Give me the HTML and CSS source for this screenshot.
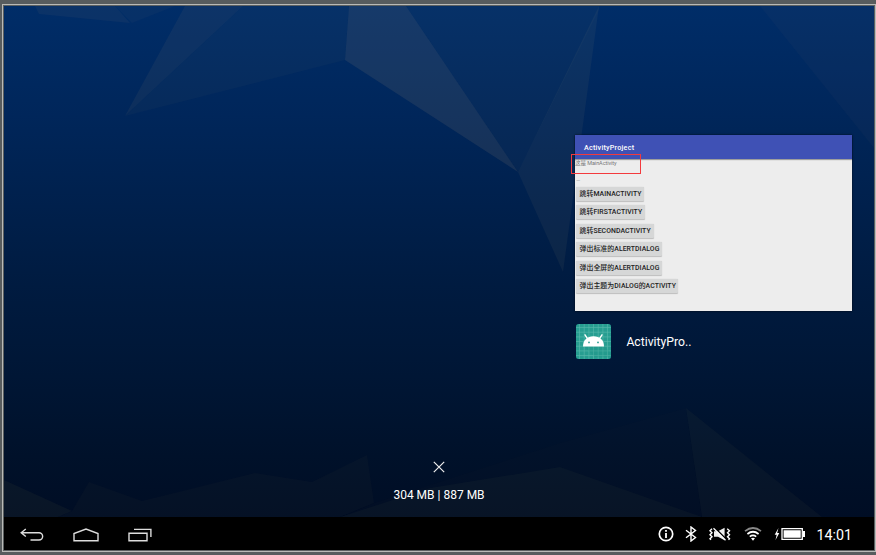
FILE: index.html
```html
<!DOCTYPE html>
<html lang="zh-CN">
<head>
<meta charset="utf-8">
<title>Recent apps</title>
<link rel="stylesheet" href="styles.css">
</head>
<body>
<div class="bezel">
<div class="screen">
  <main class="recents">
    <svg class="wallpaper" viewBox="4 6 870 511" aria-hidden="true">
      <g fill="#b7a078">
        <path opacity=".06" d="M35 6L39 14 130 23 115 6Z"/>
        <path opacity=".04" d="M115 6L132 23 175 6Z"/>
        <path opacity=".07" d="M185 6L125 116 243 6Z"/>
        <path opacity=".035" d="M243 6L125 116 345 60 349 6Z"/>
        <path opacity=".12" d="M349 6L345 60 518 172 406 6Z"/>
        <path opacity=".035" d="M406 6L518 172 599 10V6Z"/>
        <path opacity=".065" d="M599 6L518 172 563 272Z"/>
        <path opacity=".03" d="M760 6L874 148V6Z"/>
      </g>
      <g fill="#98a058">
        <path opacity=".06" d="M4 480L72 511 58 517H4Z"/>
        <path opacity=".03" d="M58 517L72 511 89 482 142 501 255 473 312 482 367 455 374 503 340 517Z"/>
        <path opacity=".012" d="M374 503L560 443 686 408 702 517H340Z"/>
        <path opacity=".045" d="M560 467L702 517H340L430 488Z"/>
        <path opacity=".045" d="M686 408L822 517H702Z"/>
      </g>
    </svg>
    <section class="task">
      <div class="preview">
        <header class="appbar">ActivityProject</header>
        <div class="app-body">
          <p class="caption">这是 MainActivity</p>
          <p class="dash">—</p>
          <div class="buttons">
            <span class="btn main">跳转MAINACTIVITY</span>
            <span class="btn first">跳转FIRSTACTIVITY</span>
            <span class="btn second">跳转SECONDACTIVITY</span>
            <span class="btn alert">弹出标准的ALERTDIALOG</span>
            <span class="btn alert">弹出全屏的ALERTDIALOG</span>
            <span class="btn themed">弹出主题为DIALOG的ACTIVITY</span>
          </div>
        </div>
        <div class="marker"></div>
      </div>
      <div class="app-label">
        <svg class="app-icon" viewBox="0 0 35 35" aria-hidden="true">
          <rect width="35" height="35" rx="2.5" fill="#279e91"/>
          <path d="M3.5 0V35M8.2 0V35M12.9 0V35M17.5 0V35M22.2 0V35M26.9 0V35M31.5 0V35M0 3.5H35M0 8.2H35M0 12.9H35M0 17.5H35M0 22.2H35M0 26.9H35M0 31.5H35" stroke="#5bb8ad" stroke-width=".6"/>
          <path d="M8 22L19 33H35V29L27 21Z" fill="#168f80" opacity=".22"/>
          <path d="M7 22.5C7 16 11.3 12.3 17.5 12.3S28 16 28 22.5Z" fill="#fff"/>
          <path d="M9 10.8L11.8 15.2M26 10.8L23.2 15.2" stroke="#fff" stroke-width="1.4" stroke-linecap="round"/>
          <circle cx="13" cy="18.4" r=".9" fill="#279e91"/><circle cx="22" cy="18.4" r=".9" fill="#279e91"/>
        </svg>
        <span class="app-name">ActivityPro..</span>
      </div>
    </section>
    <footer class="memory">
      <svg class="close" viewBox="0 0 12 12" aria-hidden="true"><path d="M.8.8L11.2 11.2M11.2.8L.8 11.2"/></svg>
      <span class="usage">304 MB | 887 MB</span>
    </footer>
  </main>
  <nav class="navbar">
    <div class="keys">
      <svg class="back" viewBox="0 0 24 14"><path d="M5.8 1L1.2 4.7 5.8 8.5M1.5 4.7H19A3.6 3.6 0 0 1 19 12H10.5"/></svg>
      <svg class="home" viewBox="0 0 26 14"><path d="M1 12.7V5.5L13 1.1 25 5.5V12.7Z"/></svg>
      <svg class="overview" viewBox="0 0 24 14"><path d="M1 5.2H19V12.8H1ZM6 1.4H22.9V9"/></svg>
    </div>
    <div class="status">
      <svg class="info" viewBox="0 0 16 16"><circle cx="8" cy="8" r="6.7" fill="none" stroke="#fff" stroke-width="1.7"/><path d="M7.1 4H8.9V5.8H7.1ZM7.1 7H8.9V12H7.1Z" fill="#fff"/></svg>
      <svg class="bluetooth" viewBox="0 0 12 16"><path d="M1 4.2L10.5 11.5 6 15V1L10.5 4.5 1 11.8" fill="none" stroke="#fff" stroke-width="1.4"/></svg>
      <svg class="mute" viewBox="0 0 22 14"><path d="M5 4.2H9L15.6.7V13.3L9 9.8H5Z" fill="#eee"/><path d="M6 1L17.5 12.5" stroke="#000" stroke-width="1.6"/><path d="M4.5 1.3L16.5 13.3" stroke="#fff" stroke-width="1.3"/><path d="M3 1.7L1 3.7 3 5.7 1 7.7 3 9.7 1 11.7 2 12.7M18.2 1.7L20.5 3.7 18.5 5.7 20.5 7.7 18.5 9.7 20.5 11.7 19.5 12.7" fill="none" stroke="#fff" stroke-width="1.4"/></svg>
      <svg class="wifi" viewBox="0 0 18 14"><g fill="none" stroke="#fff" stroke-width="1.7"><path d="M1 4.2Q9-2.2 17 4.2" stroke="#888"/><path d="M3.4 7Q9 2.5 14.6 7M5.8 9.7Q9 7.2 12.2 9.7"/></g><path d="M7 11.3Q9 10 11 11.3L9 13.7Z" fill="#fff"/></svg>
      <svg class="battery" viewBox="0 0 32 14"><path d="M4.5 1L.7 7.7H2.7L1.5 13 5.3 6H3.2Z" fill="#fff"/><path d="M8 1.7H28.3V12.3H8Z" fill="none" stroke="#fff" stroke-width="1.3"/><path d="M9.6 3.3H26.7V10.7H9.6ZM29 4H31V10H29Z" fill="#fff"/></svg>
      <time class="clock">14:01</time>
    </div>
  </nav>
</div>
</div>
</body>
</html>
```

FILE: styles.css
```css
* { box-sizing: border-box; }
body {
  margin: 0;
  height: 555px;
  padding: 4px 0 3px 2px;
  overflow: hidden;
  background: #575c5e;
  font-family: Roboto, "Noto Sans CJK SC", sans-serif;
}
.bezel {
  height: 548px;
  padding: 1px;
  border: 1px solid #b9bab7;
  background: #5b6061;
}
.screen {
  display: flex;
  flex-direction: column;
  width: 870px;
  height: 544px;
}
.recents {
  position: relative;
  display: flex;
  flex-direction: column;
  justify-content: space-between;
  height: 511px;
  padding-top: 129px;
  background: linear-gradient(#002d68 0, #00265a 110px, #00204c 200px, #001b40 280px, #001635 370px, #00112a 450px, #000d24 511px);
}
.wallpaper { position: absolute; inset: 0; width: 870px; height: 511px; }
.task { position: relative; width: 277px; margin-left: 571px; }
.preview {
  position: relative;
  height: 176px;
  background: #ededed;
  box-shadow: 0 0 2px #000b;
}
.appbar {
  height: 24px;
  padding-left: 9px;
  background: #3f51b5;
  box-shadow: 0 1px 1px #0005;
  color: #fff;
  font-size: 7.2px;
  font-weight: 500;
  letter-spacing: .22px;
  line-height: 25px;
}
.app-body { padding-left: 1px; }
.caption, .dash { margin: 0; color: #777; font-size: 5.5px; }
.caption { height: 18px; margin-left: -1px; letter-spacing: -.06px; line-height: 9px; }
.dash { height: 10px; line-height: 7px; color: #999; }
.buttons {
  display: flex;
  flex-direction: column;
  align-items: flex-start;
  gap: 4.4px;
}
.btn {
  height: 14px;
  padding-left: 3.5px;
  border-radius: 1px;
  background: #d6d7d7;
  box-shadow: 0 .5px 1px #0003;
  color: #222;
  font-size: 6.9px;
  font-weight: 500;
  letter-spacing: .06px;
  line-height: 14px;
  white-space: nowrap;
}
.main { width: 68px; }
.first { width: 69px; }
.second { width: 78px; }
.alert { width: 86px; }
.themed { width: 102px; }
.marker {
  position: absolute;
  left: -4px;
  top: 19px;
  width: 70px;
  height: 20px;
  border: 1px solid #f33a3d;
}
.app-label {
  display: flex;
  align-items: center;
  gap: 15px;
  padding: 12.5px 0 0 1.4px;
}
.app-icon { width: 35px; height: 35px; }
.app-name { padding-top: 2px; color: #fff; font-size: 12.2px; line-height: 18px; }
.memory {
  position: relative;
  display: flex;
  flex-direction: column;
  align-items: center;
  gap: 14px;
  padding: 0 0 14px 0;
}
.close { width: 12px; height: 12px; fill: none; stroke: #eee; stroke-width: 1.2; }
.usage { color: #fff; font-size: 12px; line-height: 16px; }
.navbar {
  display: flex;
  justify-content: space-between;
  align-items: center;
  height: 33px;
  padding: 1px 22px 0 15.5px;
  background: #000;
}
.keys, .status { display: flex; align-items: center; }
.keys { padding-top: 1px; fill: none; stroke: #ddd; stroke-width: 1.4; }
.back { width: 24px; height: 14px; margin-right: 29px; }
.home { width: 26px; height: 14px; margin-right: 29px; }
.overview { width: 24px; height: 14px; }
.info { width: 16px; height: 16px; margin-right: 11px; }
.bluetooth { width: 12px; height: 16px; margin-right: 12px; }
.mute { width: 22px; height: 14px; margin-right: 13px; }
.wifi { width: 18px; height: 14px; margin-right: 12px; }
.battery { width: 32px; height: 14px; margin-right: 10px; }
.clock { padding-top: 1px; color: #fff; font-size: 14.3px; line-height: 20px; }
```
